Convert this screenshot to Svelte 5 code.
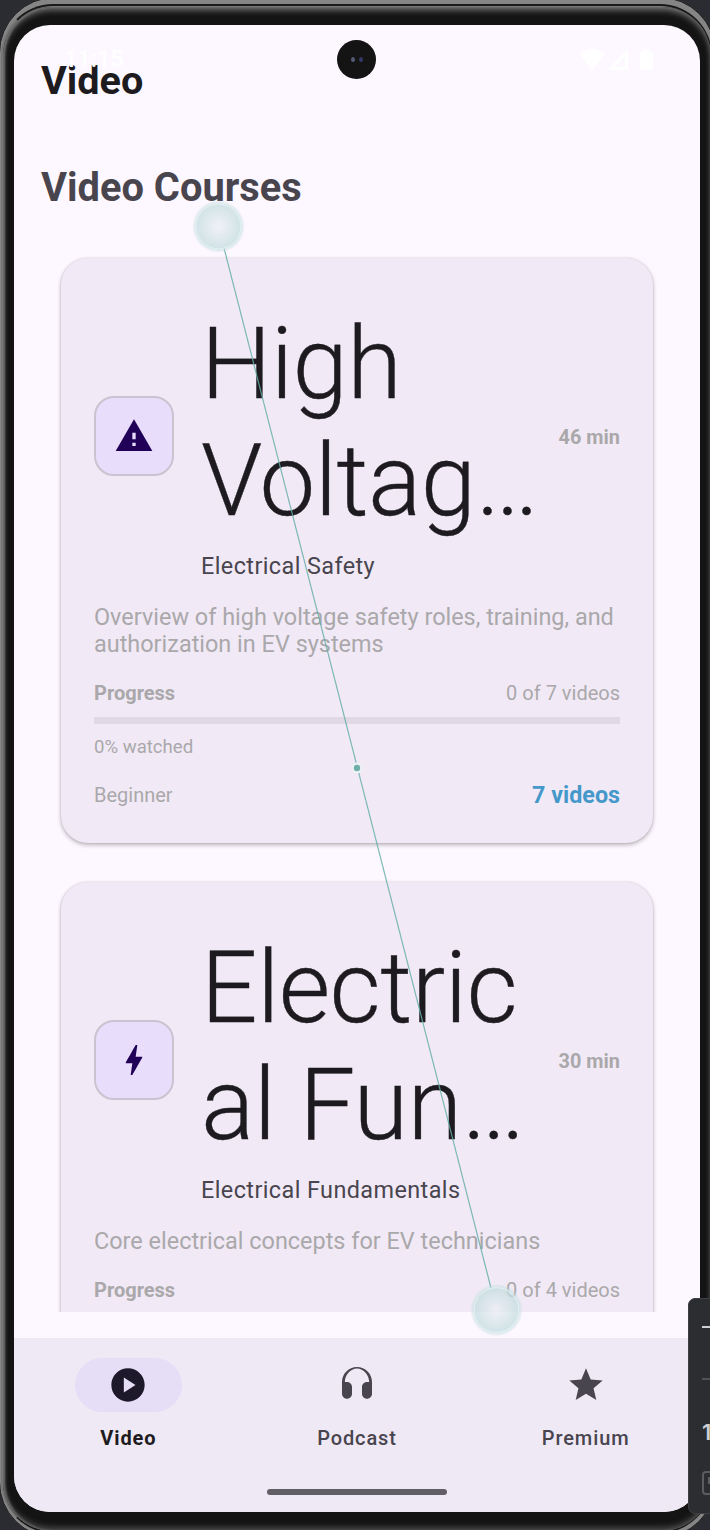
<script>
  const courses = [
    {
      icon: 'warning', lines: ['High', 'Voltag…'], duration: '46 min', category: 'Electrical Safety',
      description: ['Overview of high voltage safety roles, training, and', 'authorization in EV systems'],
      count: '0 of 7 videos', watched: '0% watched', level: 'Beginner', total: '7 videos'
    },
    {
      icon: 'bolt', lines: ['Electric', 'al Fun…'], duration: '30 min', category: 'Electrical Fundamentals',
      description: ['Core electrical concepts for EV technicians'],
      count: '0 of 4 videos'
    }
  ];
  const tabs = [
    { name: 'Video', active: true, path: 'M12 2C6.48 2 2 6.48 2 12s4.48 10 10 10 10-4.48 10-10S17.52 2 12 2zM9.5 16.5v-9l7 4.5z' },
    { name: 'Podcast', active: false, path: 'M12 1.200c-4.97 0-9 4.03-9 9v7c0 1.66 1.34 3 3 3s3-1.34 3-3v-4c0-1.66-1.34-3-3-3H4.700c0-4.200 3.300-8.100 7.300-8.100s7.300 3.900 7.300 8.100H18c-1.66 0-3 1.34-3 3v4c0 1.66 1.34 3 3 3s3-1.34 3-3v-7c0-4.97-4.03-9-9-9z' },
    { name: 'Premium', active: false, path: 'M12 17.27L18.18 21l-1.64-7.03L22 9.24l-7.19-.61L12 2 9.19 8.63 2 9.24l5.46 4.73L5.82 21z' }
  ];
</script>

<div class="stage">
  <div class="rim"></div>
  <div class="groove"></div>
  <div class="body"></div>
  <div class="screen">
    <header><h1>Video</h1></header>
    <h2>Video Courses</h2>
    <main>
      {#each courses as c}
        <article>
          <div class="top">
            <div class="badge">
              {#if c.icon === 'warning'}
                <svg width="40" height="40" viewBox="0 0 24 24"><path d="M1 21h22L12 2 1 21zm12-3h-2v-2h2v2zm0-4h-2v-4h2v4z" /></svg>
              {:else}
                <svg width="40" height="40" viewBox="0 0 24 24"><path d="M11 21h-1l1-7H7.500c-.58 0-.57-.32-.38-.66.19-.34.05-.08.07-.12C8.480 10.940 10.420 7.540 13 3h1l-1 7h3.500c.49 0 .56.33.47.51l-.07.15C12.960 17.550 11 21 11 21z" /></svg>
              {/if}
            </div>
            <div class="names">
              <h3>{#each c.lines as line}<span>{line}</span>{/each}</h3>
              <div class="category">{c.category}</div>
            </div>
            <div class="duration">{c.duration}</div>
          </div>
          <p>{#each c.description as line}<span>{line}</span>{/each}</p>
          <div class="row progress"><b>Progress</b><span>{c.count}</span></div>
          {#if c.total}
            <div class="bar"></div>
            <div class="watched">{c.watched}</div>
            <div class="row level"><span>{c.level}</span><strong>{c.total}</strong></div>
          {/if}
        </article>
      {/each}
    </main>
    <nav>
      {#each tabs as t}
        <div class="tab" class:active={t.active}>
          <div class="pill"><svg width="40" height="40" viewBox="0 0 24 24"><path d={t.path} /></svg></div>
          <span>{t.name}</span>
        </div>
      {/each}
    </nav>
    <div class="handle"></div>
    <div class="clock">11:15</div>
    <svg class="status" width="76" height="26" viewBox="0 0 76 26">
      <path d="M0 7Q12-3 25 7L12 23z" />
      <path d="M48 2v21H27zm-3 7-10 11h10z" fill-rule="evenodd" />
      <path d="M60 5h3V2h6v3h4v18H60z" />
    </svg>
    <div class="camera"><i></i><i></i></div>
  </div>
  <svg class="gesture" width="710" height="1530" viewBox="0 0 710 1530">
    <defs>
      <radialGradient id="touch"><stop offset="0" stop-color="#eceff5" stop-opacity=".75" /><stop offset=".84" stop-color="#c3dcdf" stop-opacity=".75" /><stop offset="1" stop-color="#c8dfe1" stop-opacity=".15" /></radialGradient>
    </defs>
    <path d="M224 248L491 1288" stroke="#68afaa" stroke-width="1.200" opacity=".85" />
    {#each [[218.500, 226.500], [496.500, 1310]] as [x, y]}
      <circle cx={x} cy={y} r="26" fill="url(#touch)" />
      <circle cx={x} cy={y} r="22.300" fill="none" stroke="#e3f3f2" stroke-width="1" />
    {/each}
    <circle cx="357" cy="768" r="4.300" fill="#70aeaa" stroke="#eef2f7" stroke-width="2.200" />
  </svg>
  <aside>
    <i class="minus"></i>
    <i class="rule"></i>
    <span>1:1</span>
    <i class="frame"><i></i></i>
  </aside>
</div>

<style>
  :global(body) { background: #25262b; overflow: hidden; }
  * { box-sizing: border-box; }
  .stage { position: relative; width: 710px; height: 1530px; overflow: hidden; font-family: Roboto, sans-serif; background: #2b2c31; }
  .rim { position: absolute; inset: -3px -6px -8px -1px; border-radius: 56px; background: #858585; border: 1px solid #222; }
  .groove { position: absolute; inset: 4px -2px -3px 1px; border-radius: 52px; background: #777; border: 2px solid #191919; border-left-color: #777; }
  .body { position: absolute; inset: 7px -1px -1px 3px; border-radius: 49px; background: #141414; box-shadow: inset 0 4px 6px -1px #777, inset 2px 0 2px #666, inset 0 -4px 6px -1px #555; }
  .screen { position: absolute; left: 14px; top: 25px; width: 686px; height: 1487px; border-radius: 36px; background: #fdf8ff; overflow: hidden; display: flex; flex-direction: column; }
  h1, h2, h3, p { margin: 0; }
  header { height: 135px; padding: 33px 27px 0; }
  h1, h2 { font-size: 39.850px; line-height: 46px; font-weight: 700; color: #1d1b20; }
  h1 { font-size: 39.600px; }
  h2 { height: 73px; padding: 5px 27px 0; color: #49454f; }
  main { height: 1079px; margin: 0 43px; padding: 25px 4px 0; overflow: hidden; }
  article { height: 585px; margin-bottom: 39px; padding: 47px 33px 0; border-radius: 27px; background: #f1eaf6; box-shadow: 0 2px 4px #0004, 0 0 2px #0002; }
  .top { display: flex; align-items: flex-start; height: 273px; }
  .badge { width: 80px; height: 80px; flex: none; margin-top: 91px; border: 2px solid #cac4d0; border-radius: 20px; background: #e8ddfb; display: grid; place-items: center; }
  .badge svg { fill: #210057; }
  .names { width: 357px; padding-left: 27px; flex: none; }
  h3 { font-weight: 330; font-size: 99.500px; line-height: 117px; letter-spacing: -.6px; color: #1d1b20; white-space: nowrap; height: 244px; padding-top: 1px; -webkit-text-stroke: .35px #1d1b20; }
  h3 span, p span { display: block; white-space: nowrap; }
  .category { font-size: 23.400px; line-height: 34px; letter-spacing: .42px; color: #49454f; }
  .duration { margin: 121px 0 0 auto; line-height: 24px; font-size: 19.900px; font-weight: 700; color: #aaa8aa; white-space: nowrap; }
  p { margin-top: 26px; font-size: 23.440px; line-height: 27px; color: #aaa8aa; }
  .row { display: flex; align-items: center; justify-content: space-between; color: #aaa8aa; font-size: 20px; }
  .progress { height: 24px; margin-top: 23px; }
  .bar { height: 7px; background: #e0d9e5; margin-top: 12px; }
  .watched { height: 24px; line-height: 24px; margin-top: 11px; font-size: 18.600px; color: #aaa8aa; }
  .level { height: 28px; margin-top: 22px; }
  strong { color: #4598ca; font-size: 23.300px; }
  nav { margin-top: 26px; height: 174px; padding-top: 20px; display: grid; grid-template-columns: repeat(3, 1fr); background: #efe9f5; }
  .tab { display: flex; flex-direction: column; align-items: center; color: #49454f; font-size: 20px; font-weight: 500; letter-spacing: .9px; }
  .pill { width: 107px; height: 54px; border-radius: 27px; display: grid; place-items: center; }
  .pill svg { fill: #49454f; }
  .tab span { margin-top: 14px; line-height: 24px; }
  .active { color: #1d1b20; font-weight: 700; }
  .active .pill { background: #e6def6; }
  .active .pill svg { fill: #1d192b; }
  .handle { position: absolute; left: 253px; top: 1464px; width: 180px; height: 6px; border-radius: 3px; background: #625e66; }
  .clock { position: absolute; left: 50px; top: 20px; color: #fff; font-size: 23.500px; line-height: 28px; font-weight: 500; }
  .status { position: absolute; left: 566px; top: 22px; fill: #fff; }
  .camera { position: absolute; left: 323px; top: 15px; width: 39px; height: 39px; border-radius: 50%; background: #141414; display: flex; justify-content: center; align-items: center; gap: 4px; }
  .camera i { width: 4px; height: 5px; border-radius: 50%; background: #535b74; }
  .camera i + i { background: #343768; }
  .gesture { position: absolute; left: 0; top: 0; }
  aside { position: absolute; left: 688px; top: 1298px; width: 50px; height: 216px; border: 1px solid #3e3f43; border-radius: 7px; background: #2b2d30; color: #ced0d6; overflow: hidden; padding: 27px 0 0 13px; display: flex; flex-direction: column; }
  .minus { width: 20px; height: 2px; background: #ced0d6; flex: none; }
  .rule { width: 20px; height: 2px; margin-top: 50px; background: #505257; flex: none; }
  aside span { margin-top: 40px; font: 600 22px/24px Inter, sans-serif; }
  .frame { width: 24px; height: 24px; flex: none; border: 2px solid #5a5c60; border-radius: 4px; margin-top: 27px; padding: 4px; }
  .frame i { display: block; width: 7px; height: 7px; background: #5a5c60; }
</style>
